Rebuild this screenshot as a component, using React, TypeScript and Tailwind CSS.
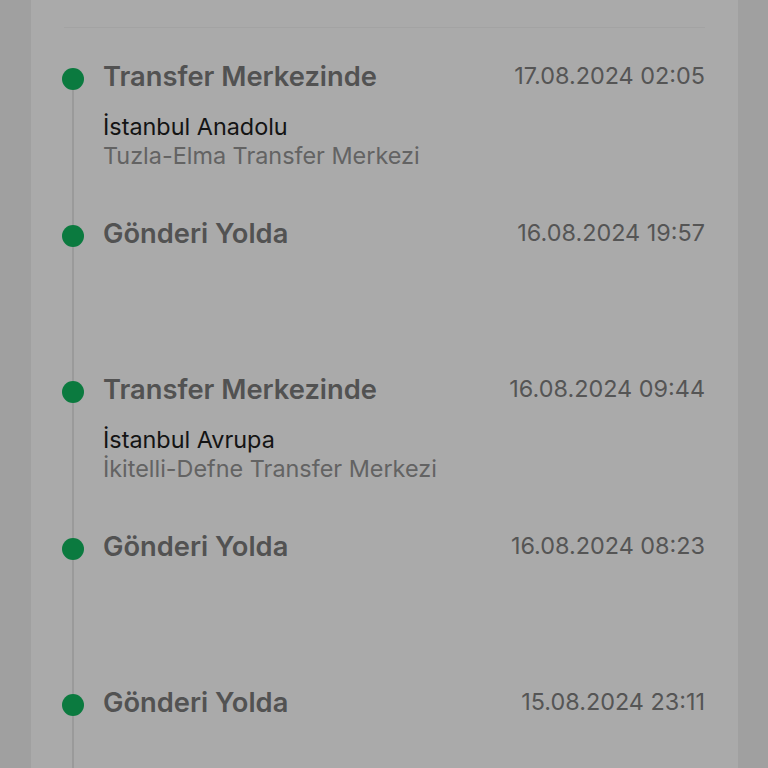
const events = [
  { title: "Transfer Merkezinde", date: "17.08.2024 02:05", city: "İstanbul Anadolu", place: "Tuzla-Elma Transfer Merkezi" },
  { title: "Gönderi Yolda", date: "16.08.2024 19:57" },
  { title: "Transfer Merkezinde", date: "16.08.2024 09:44", city: "İstanbul Avrupa", place: "İkitelli-Defne Transfer Merkezi" },
  { title: "Gönderi Yolda", date: "16.08.2024 08:23" },
  { title: "Gönderi Yolda", date: "15.08.2024 23:11" },
];

export default function App() {
  return (
    <main
      className="flex h-[768px] overflow-hidden bg-[#a0a0a0] pl-[31px] pr-[30px]"
      style={{ fontFamily: "Inter, 'Noto Sans', sans-serif" }}
    >
      <div className="flex-1 bg-[#aaaaaa] pt-[27px]">
        <div className="mx-[33px] h-px bg-[#a3a3a3]" />

        {/* timeline */}
        <div className="mt-[33px] pl-[31px] pr-[33px]">
          {events.map((ev, i) => (
            <div key={i} className="flex h-[156.5px]">
              <div className="flex w-[22px] flex-col items-center">
                <div className={i === 0 ? "h-[7px] w-[2px]" : "h-[7px] w-[2px] bg-[#9a9a9a]"} />
                <div className="h-[22px] w-[22px] rounded-full bg-[#0b7a3f]" />
                <div className="w-[2px] flex-1 bg-[#9a9a9a]" />
              </div>
              <div className="ml-[19px] flex-1">
                <div className="flex items-start justify-between">
                  <p className="text-[27.3px] font-semibold leading-[32px] text-[#525252]">{ev.title}</p>
                  <p className="text-[23.4px] leading-[29px] text-[#555555]">{ev.date}</p>
                </div>
                {ev.city && (
                  <div className="mt-[19px]">
                    <p className="text-[23.4px] leading-[29px] text-[#141414]">{ev.city}</p>
                    <p className="text-[23.4px] leading-[29px] text-[#636363]">{ev.place}</p>
                  </div>
                )}
              </div>
            </div>
          ))}
        </div>
      </div>
    </main>
  );
}
